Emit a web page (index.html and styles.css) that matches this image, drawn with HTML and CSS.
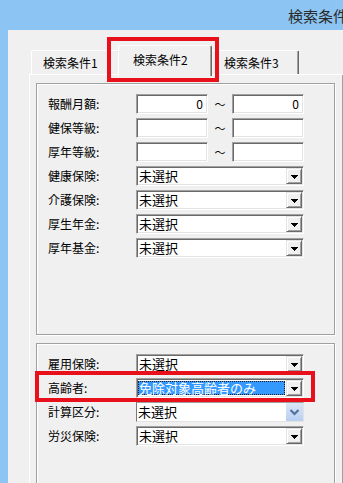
FILE: index.html
```html
<!DOCTYPE html>
<html lang="ja">
<head>
<meta charset="utf-8">
<title>検索条件</title>
<link rel="stylesheet" href="styles.css">
</head>
<body>
<div class="window">
  <div class="titlebar">検索条件</div>
  <div class="frame">
    <div class="client">
      <div class="tabs">
        <div class="tab tab1">検索条件1</div>
        <div class="tab tab2">検索条件2</div>
        <div class="tab tab3">検索条件3</div>
      </div>
      <div class="panel">
        <div class="group group1">
          <div class="row">
            <span class="label">報酬月額:</span>
            <span class="input num">0</span><span class="tilde">～</span><span class="input num">0</span>
          </div>
          <div class="row">
            <span class="label">健保等級:</span>
            <span class="input"></span><span class="tilde">～</span><span class="input"></span>
          </div>
          <div class="row">
            <span class="label">厚年等級:</span>
            <span class="input"></span><span class="tilde">～</span><span class="input"></span>
          </div>
          <div class="row">
            <span class="label">健康保険:</span>
            <div class="select"><span class="val">未選択</span><span class="btn"><svg width="7" height="4" shape-rendering="crispEdges"><rect x="0" y="0" width="7" height="1"/><rect x="1" y="1" width="5" height="1"/><rect x="2" y="2" width="3" height="1"/><rect x="3" y="3" width="1" height="1"/></svg></span></div>
          </div>
          <div class="row">
            <span class="label">介護保険:</span>
            <div class="select"><span class="val">未選択</span><span class="btn"><svg width="7" height="4" shape-rendering="crispEdges"><rect x="0" y="0" width="7" height="1"/><rect x="1" y="1" width="5" height="1"/><rect x="2" y="2" width="3" height="1"/><rect x="3" y="3" width="1" height="1"/></svg></span></div>
          </div>
          <div class="row">
            <span class="label">厚生年金:</span>
            <div class="select"><span class="val">未選択</span><span class="btn"><svg width="7" height="4" shape-rendering="crispEdges"><rect x="0" y="0" width="7" height="1"/><rect x="1" y="1" width="5" height="1"/><rect x="2" y="2" width="3" height="1"/><rect x="3" y="3" width="1" height="1"/></svg></span></div>
          </div>
          <div class="row">
            <span class="label">厚年基金:</span>
            <div class="select"><span class="val">未選択</span><span class="btn"><svg width="7" height="4" shape-rendering="crispEdges"><rect x="0" y="0" width="7" height="1"/><rect x="1" y="1" width="5" height="1"/><rect x="2" y="2" width="3" height="1"/><rect x="3" y="3" width="1" height="1"/></svg></span></div>
          </div>
        </div>
        <div class="group group2">
          <div class="row">
            <span class="label">雇用保険:</span>
            <div class="select"><span class="val">未選択</span><span class="btn"><svg width="7" height="4" shape-rendering="crispEdges"><rect x="0" y="0" width="7" height="1"/><rect x="1" y="1" width="5" height="1"/><rect x="2" y="2" width="3" height="1"/><rect x="3" y="3" width="1" height="1"/></svg></span></div>
          </div>
          <div class="row">
            <span class="label">高齢者:</span>
            <div class="select"><span class="val hl">免除対象高齢者のみ</span><span class="btn"><svg width="7" height="4" shape-rendering="crispEdges"><rect x="0" y="0" width="7" height="1"/><rect x="1" y="1" width="5" height="1"/><rect x="2" y="2" width="3" height="1"/><rect x="3" y="3" width="1" height="1"/></svg></span></div>
          </div>
          <div class="row">
            <span class="label">計算区分:</span>
            <div class="select hot"><span class="val">未選択</span><span class="btn hotbtn"><svg width="17" height="18"><polyline points="4.5,7 8.5,11 12.5,7" fill="none" stroke="#5470a0" stroke-width="2.2"/></svg></span></div>
          </div>
          <div class="row">
            <span class="label">労災保険:</span>
            <div class="select"><span class="val">未選択</span><span class="btn"><svg width="7" height="4" shape-rendering="crispEdges"><rect x="0" y="0" width="7" height="1"/><rect x="1" y="1" width="5" height="1"/><rect x="2" y="2" width="3" height="1"/><rect x="3" y="3" width="1" height="1"/></svg></span></div>
          </div>
        </div>
      </div>
    </div>
  </div>
  <div class="mark mark-tab"></div>
  <div class="mark mark-row"></div>
</div>
</body>
</html>
```

FILE: styles.css
```css
* { box-sizing: border-box; }
html, body { margin: 0; padding: 0; }
body {
  background: #8cc4f4;
  font-family: "Noto Sans CJK JP", "Noto Sans", sans-serif;
  color: #000;
}
.window {
  position: relative;
  width: 343px;
  height: 483px;
  overflow: hidden;
  background: #8cc4f4;
  display: flex;
  flex-direction: column;
}
.titlebar {
  flex: none;
  height: 30px;
  padding-left: 288px;
  padding-top: 1px;
  font-size: 15px;
  line-height: 30px;
  color: #2a2a2a;
  white-space: nowrap;
}
.frame {
  flex: 1;
  min-height: 0;
  display: flex;
  padding-left: 8px;
}
.client {
  flex: 1;
  min-width: 0;
  background: #f0f0f0;
  padding-top: 15px;
  display: flex;
  flex-direction: column;
}
.tabs {
  flex: none;
  display: flex;
  align-items: flex-end;
  padding-left: 23px;
}
.tab {
  flex: none;
  height: 24px;
  font-size: 12px;
  line-height: 14px;
  padding-top: 5px;
  background: #f0f0f0;
  border-top: 1px solid #fff;
  border-left: 1px solid #fff;
  border-right: 1px solid #696969;
  border-radius: 2px 2px 0 0;
  box-shadow: inset -1px 0 0 #a0a0a0;
  white-space: nowrap;
}
.tab1 { width: 89px; padding-left: 11px; }
.tab2 {
  position: relative;
  z-index: 1;
  width: 94px;
  height: 31px;
  margin-left: -2px;
  margin-bottom: -2px;
  padding-top: 7px;
  padding-left: 14px;
}
.tab3 { width: 89px; margin-left: -2px; padding-left: 13px; }
.panel {
  flex: 1;
  width: 315px;
  margin-left: 21px;
  border-top: 1px solid #fff;
  border-left: 1px solid #fff;
  border-right: 1px solid #696969;
  box-shadow: inset -1px 0 0 #a0a0a0;
  padding: 8px 0 0 6px;
}
.group {
  width: 299px;
  border: 1px solid #a0a0a0;
  box-shadow: inset 1px 1px 0 #fff, 1px 1px 0 #fff;
  padding: 10px 0 0 11px;
}
.group1 { height: 252px; }
.group2 { height: 200px; margin-top: 8px; }
.row {
  display: flex;
  align-items: center;
  height: 20px;
  margin-bottom: 4px;
}
.label {
  flex: none;
  width: 88px;
  font-size: 12px;
  line-height: 14px;
  white-space: nowrap;
}
.input, .select {
  flex: none;
  height: 20px;
  background: #fff;
  border: 1px solid;
  border-color: #a0a0a0 #fff #fff #a0a0a0;
  box-shadow: inset 1px 1px 0 #696969, inset -1px -1px 0 #e3e3e3;
}
.input {
  width: 72px;
  font-size: 12px;
  line-height: 18px;
}
.num { text-align: right; padding-right: 4px; }
.tilde {
  flex: none;
  width: 24px;
  text-align: center;
  font-size: 11px;
  line-height: 14px;
}
.select {
  width: 168px;
  display: flex;
  align-items: center;
  padding: 1px;
}
.val {
  flex: 1;
  min-width: 0;
  font-size: 13px;
  line-height: 16px;
  padding-left: 1px;
  white-space: nowrap;
}
.val.hl {
  align-self: stretch;
  margin: 1px 1px 1px 0;
  background: #3399ff;
  color: #fff;
  border: 1px dotted #1a1a1a;
  line-height: 12px;
  padding-left: 0;
}
.btn {
  flex: none;
  width: 16px;
  height: 16px;
  background: #f0f0f0;
  border: 1px solid;
  border-color: #e3e3e3 #696969 #696969 #e3e3e3;
  box-shadow: inset 1px 1px 0 #fff, inset -1px -1px 0 #a0a0a0;
  display: flex;
  align-items: center;
  justify-content: center;
  padding-top: 1px;
}
.btn svg { display: block; fill: #000; }
.select.hot {
  border-color: #a0a0a0 #e3e3e3 #e3e3e3 #7a7a7a;
  box-shadow: none;
  padding: 0;
}
.hotbtn {
  width: 17px;
  height: 18px;
  border: none;
  box-shadow: none;
  padding: 0;
  background: linear-gradient(#dbe7f9, #b9cff2);
}
.mark {
  position: absolute;
  border: 4px solid #e8101a;
}
.mark-tab { left: 107px; top: 37px; width: 112px; height: 45px; }
.mark-row { left: 35px; top: 371px; width: 280px; height: 31px; }
```
